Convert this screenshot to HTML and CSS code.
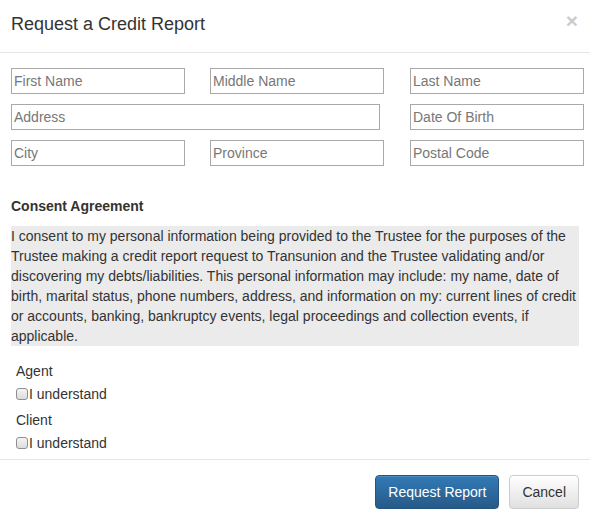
FILE: index.html
```html
<!DOCTYPE html>
<html>
<head>
<meta charset="utf-8">
<link rel="stylesheet" href="styles.css">
</head>
<body>
<div class="modal">
  <div class="modal-header">
    <h4 class="modal-title">Request a Credit Report</h4>
    <button class="close" type="button">×</button>
  </div>
  <div class="modal-body">
    <div class="fields">
      <input class="field" type="text" placeholder="First Name">
      <input class="field" type="text" placeholder="Middle Name">
      <input class="field" type="text" placeholder="Last Name">
      <input class="field field-address" type="text" placeholder="Address">
      <input class="field" type="text" placeholder="Date Of Birth">
      <input class="field" type="text" placeholder="City">
      <input class="field" type="text" placeholder="Province">
      <input class="field" type="text" placeholder="Postal Code">
    </div>
    <div class="consent-title">Consent Agreement</div>
    <div class="consent-box">I consent to my personal information being provided to the Trustee for the purposes of the Trustee making a credit report request to Transunion and the Trustee validating and/or discovering my debts/liabilities. This personal information may include: my name, date of birth, marital status, phone numbers, address, and information on my: current lines of credit or accounts, banking, bankruptcy events, legal proceedings and collection events, if applicable.</div>
    <div class="signers">
      <div class="signer-label">Agent</div>
      <label class="check-row check-first"><input type="checkbox" class="check">I understand</label>
      <div class="signer-label signer-second">Client</div>
      <label class="check-row check-second"><input type="checkbox" class="check">I understand</label>
    </div>
  </div>
  <div class="modal-footer">
    <button class="btn btn-primary" type="button">Request Report</button>
    <button class="btn btn-default" type="button">Cancel</button>
  </div>
</div>
</body>
</html>
```
FILE: styles.css
```css
html, body {
  margin: 0;
  padding: 0;
  background: #fff;
}
body {
  font-family: "Liberation Sans", Arial, sans-serif;
  font-size: 14px;
  color: #333;
}
.modal {
  width: 590px;
}
.modal-header {
  display: flex;
  justify-content: space-between;
  align-items: flex-start;
  padding: 11px 12px 15px 11px;
  border-bottom: 1px solid #e5e5e5;
}
.modal-title {
  margin: 0;
  font-size: 18px;
  font-weight: normal;
  line-height: 26px;
  color: #333;
}
.close {
  border: 0;
  background: none;
  padding: 0;
  margin-top: 0;
  font-family: "Liberation Sans", Arial, sans-serif;
  font-size: 21px;
  font-weight: bold;
  line-height: 20px;
  color: #000;
  opacity: 0.2;
  cursor: pointer;
}
.modal-body {
  padding: 15px 11px 0 11px;
}
.fields {
  display: grid;
  grid-template-columns: 174px 175px 174px;
  column-gap: 25px;
  row-gap: 10px;
}
.field {
  box-sizing: border-box;
  height: 26px;
  width: 174px;
  margin: 0;
  padding: 0 2px 1px;
  border: 1px solid #a9a9a9;
  border-radius: 0;
  font-family: "Liberation Sans", Arial, sans-serif;
  font-size: 14px;
  color: #333;
  background: #fff;
}
.field::placeholder {
  color: #777;
  opacity: 1;
}
.field-address {
  grid-column: span 2;
  width: 369px;
}
.consent-title {
  margin-top: 30px;
  line-height: 20px;
  font-weight: bold;
}
.consent-box {
  margin-top: 10px;
  width: 568px;
  background: #ebebeb;
  line-height: 20px;
}
.signers {
  padding-left: 5px;
  margin-top: 15px;
}
.signer-label {
  line-height: 20px;
}
.signer-second {
  margin-top: 6px;
}
.check-row {
  display: flex;
  align-items: center;
  line-height: 20px;
}
.check-first {
  margin-top: 3px;
}
.check-second {
  margin-top: 3px;
}
.check {
  appearance: none;
  -webkit-appearance: none;
  box-sizing: border-box;
  width: 12px;
  height: 12px;
  margin: 0 1px 0 0;
  border: 1px solid #8f8f8f;
  border-radius: 3px;
  background: linear-gradient(#f4f4f4, #dcdcdc);
}
.modal-footer {
  margin-top: 6px;
  border-top: 1px solid #e5e5e5;
  padding: 15px 11px 0 0;
  display: flex;
  justify-content: flex-end;
  gap: 10px;
}
.btn {
  box-sizing: border-box;
  height: 34px;
  padding: 6px 12px;
  font-family: "Liberation Sans", Arial, sans-serif;
  font-size: 14px;
  line-height: 20px;
  border-radius: 4px;
  border: 1px solid transparent;
  cursor: pointer;
}
.btn-primary {
  min-width: 124px;
  color: #fff;
  background: linear-gradient(#337ab7, #265a88);
  border-color: #245580;
  box-shadow: inset 0 1px 0 rgba(255,255,255,.15), 0 1px 1px rgba(0,0,0,.075);
}
.btn-default {
  color: #333;
  background: linear-gradient(#fff, #e0e0e0);
  border-color: #ccc;
  box-shadow: inset 0 1px 0 rgba(255,255,255,.15), 0 1px 1px rgba(0,0,0,.075);
}
```
